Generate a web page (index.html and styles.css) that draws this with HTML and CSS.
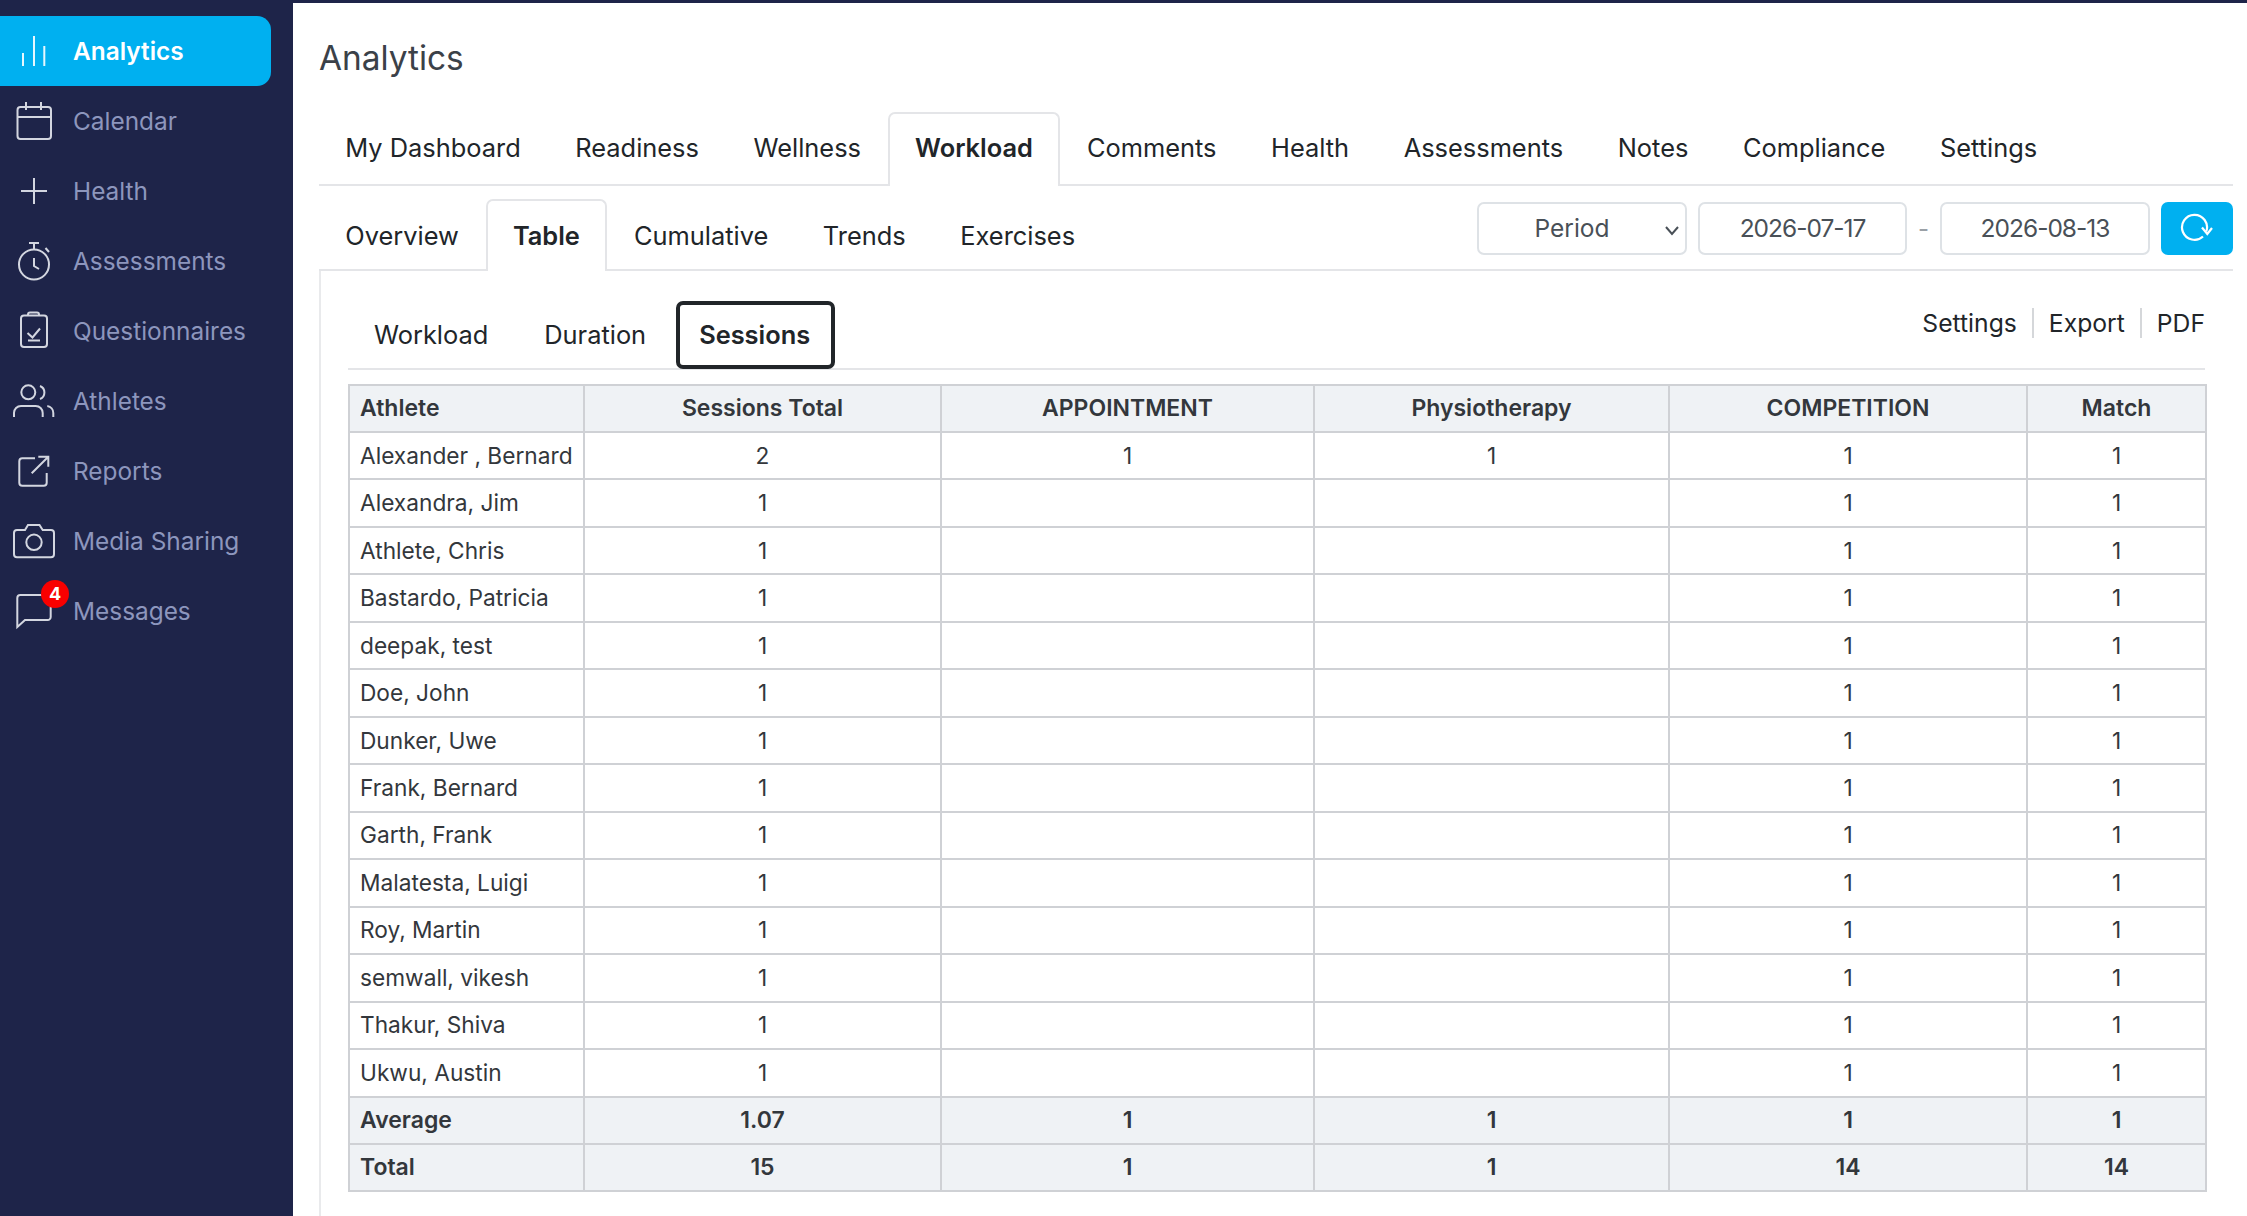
FILE: index.html
```html
<!DOCTYPE html>
<html lang="en">
<head>
    <meta charset="UTF-8">
    <title>Analytics</title>
    <link rel="stylesheet" href="styles.css">
</head>
<body>
    <!-- Sidebar -->
    <aside class="sidebar">
        <a class="side-item active">
            <span class="side-icon"><svg viewBox="0 0 48 48"><path d="M13 26v13M24 9v30M34.3 19v20"/></svg></span>
            Analytics
        </a>
        <a class="side-item">
            <span class="side-icon"><svg viewBox="0 0 48 48"><rect x="7.5" y="10" width="33.500" height="32" rx="3"/><path d="M7.500 20h33.500M16 5v8M31 5v8"/></svg></span>
            Calendar
        </a>
        <a class="side-item">
            <span class="side-icon"><svg viewBox="0 0 48 48"><path d="M24 11v26M11 24h26"/></svg></span>
            Health
        </a>
        <a class="side-item">
            <span class="side-icon"><svg viewBox="0 0 48 48"><circle cx="24" cy="27.500" r="15"/><path d="M19 6h10M24 6v6M24 21v8l5 3M35.500 11l3.500 4"/></svg></span>
            Assessments
        </a>
        <a class="side-item">
            <span class="side-icon"><svg viewBox="0 0 48 48"><rect x="11" y="8.500" width="26" height="31.500" rx="3"/><path d="M18 8.500v-1a2 2 0 0 1 2-2h7a2 2 0 0 1 2 2v1M17.500 26l5 4.500 7.500-9M18 33.500h12"/></svg></span>
            Questionnaires
        </a>
        <a class="side-item">
            <span class="side-icon"><svg viewBox="0 0 48 48"><circle cx="18.300" cy="15.300" r="7"/><path d="M30 9a7 7 0 0 1 0 13M4 40v-4a7 7 0 0 1 7-7h14.700a7 7 0 0 1 7 7v4M37.300 29a7 7 0 0 1 6 7v4"/></svg></span>
            Athletes
        </a>
        <a class="side-item">
            <span class="side-icon"><svg viewBox="0 0 48 48"><path d="M25 11.300H12.300a3 3 0 0 0-3 3v21.400a3 3 0 0 0 3 3h21.400a3 3 0 0 0 3-3V26M21.700 26.300 38.300 9.700M28.300 9.700h10v10"/></svg></span>
            Reports
        </a>
        <a class="side-item">
            <span class="side-icon"><svg viewBox="0 0 48 48"><path d="M7 13h8l3-5h11.500l3.200 5H41a3 3 0 0 1 3 3v21.300a3 3 0 0 1-3 3H7a3 3 0 0 1-3-3V16a3 3 0 0 1 3-3z"/><circle cx="24" cy="25.300" r="7.700"/></svg></span>
            Media Sharing
        </a>
        <a class="side-item">
            <span class="side-icon">
                <svg viewBox="0 0 48 48"><path d="M10.300 8h27.400a3 3 0 0 1 3 3v19a3 3 0 0 1-3 3H15l-7.700 7V11a3 3 0 0 1 3-3z"/></svg>
                <span class="badge">4</span>
            </span>
            Messages
        </a>
    </aside>

    <main class="content">
        <h1 class="page-title">Analytics</h1>

        <!-- Main tabs -->
        <nav class="tabs main-tabs">
            <a class="tab">My Dashboard</a>
            <a class="tab">Readiness</a>
            <a class="tab">Wellness</a>
            <a class="tab active">Workload</a>
            <a class="tab">Comments</a>
            <a class="tab">Health</a>
            <a class="tab">Assessments</a>
            <a class="tab">Notes</a>
            <a class="tab">Compliance</a>
            <a class="tab">Settings</a>
        </nav>

        <!-- Second row tabs + period filter -->
        <div class="tabs second-row">
            <nav class="second-tabs">
                <a class="tab">Overview</a>
                <a class="tab active">Table</a>
                <a class="tab">Cumulative</a>
                <a class="tab">Trends</a>
                <a class="tab">Exercises</a>
            </nav>
            <div class="filters">
                <div class="field select-field">
                    <span>Period</span>
                    <svg class="chevron" viewBox="0 0 16 16"><path d="M2 5l6 7 6-7"/></svg>
                </div>
                <div class="field date-field first-date">2026-07-17</div>
                <span class="dash">-</span>
                <div class="field date-field">2026-08-13</div>
                <button class="refresh-btn">
                    <svg viewBox="0 0 34 34"><path d="M23 24.500A12.500 12.500 0 1 1 26.300 19.500"/><path d="M22 15.500l5.300 6.500 4.700-6"/></svg>
                </button>
            </div>
        </div>

        <section class="panel">
            <div class="sub-bar">
                <nav class="sub-tabs">
                    <a class="sub-tab">Workload</a>
                    <a class="sub-tab">Duration</a>
                    <a class="sub-tab active">Sessions</a>
                </nav>
                <div class="actions">
                    <a>Settings</a>
                    <a>Export</a>
                    <a>PDF</a>
                </div>
            </div>

            <table class="data-table">
                <colgroup>
                    <col class="col-athlete">
                    <col class="col-total">
                    <col class="col-appt">
                    <col class="col-physio">
                    <col class="col-comp">
                    <col class="col-match">
                </colgroup>
                <thead>
                    <tr><th>Athlete</th><th>Sessions Total</th><th>APPOINTMENT</th><th>Physiotherapy</th><th>COMPETITION</th><th>Match</th></tr>
                </thead>
                <tbody>
                    <tr><td>Alexander , Bernard</td><td>2</td><td>1</td><td>1</td><td>1</td><td>1</td></tr>
                    <tr><td>Alexandra, Jim</td><td>1</td><td></td><td></td><td>1</td><td>1</td></tr>
                    <tr><td>Athlete, Chris</td><td>1</td><td></td><td></td><td>1</td><td>1</td></tr>
                    <tr><td>Bastardo, Patricia</td><td>1</td><td></td><td></td><td>1</td><td>1</td></tr>
                    <tr><td>deepak, test</td><td>1</td><td></td><td></td><td>1</td><td>1</td></tr>
                    <tr><td>Doe, John</td><td>1</td><td></td><td></td><td>1</td><td>1</td></tr>
                    <tr><td>Dunker, Uwe</td><td>1</td><td></td><td></td><td>1</td><td>1</td></tr>
                    <tr><td>Frank, Bernard</td><td>1</td><td></td><td></td><td>1</td><td>1</td></tr>
                    <tr><td>Garth, Frank</td><td>1</td><td></td><td></td><td>1</td><td>1</td></tr>
                    <tr><td>Malatesta, Luigi</td><td>1</td><td></td><td></td><td>1</td><td>1</td></tr>
                    <tr><td>Roy, Martin</td><td>1</td><td></td><td></td><td>1</td><td>1</td></tr>
                    <tr><td>semwall, vikesh</td><td>1</td><td></td><td></td><td>1</td><td>1</td></tr>
                    <tr><td>Thakur, Shiva</td><td>1</td><td></td><td></td><td>1</td><td>1</td></tr>
                    <tr><td>Ukwu, Austin</td><td>1</td><td></td><td></td><td>1</td><td>1</td></tr>
                </tbody>
                <tfoot>
                    <tr><td>Average</td><td>1.07</td><td>1</td><td>1</td><td>1</td><td>1</td></tr>
                    <tr><td>Total</td><td>15</td><td>1</td><td>1</td><td>14</td><td>14</td></tr>
                </tfoot>
            </table>
        </section>
    </main>
</body>
</html>
```

FILE: styles.css
```css
* {
    margin: 0;
    padding: 0;
    box-sizing: border-box;
}

html, body {
    height: 100%;
}

body {
    display: flex;
    font-family: 'Inter', 'Liberation Sans', sans-serif;
    color: #212529;
    background: #fff;
    overflow: hidden;
}

/* Sidebar */
.sidebar {
    flex: 0 0 293px;
    background: #1e2449;
    padding: 16px 22px 0 0;
}

.side-item {
    display: flex;
    align-items: center;
    gap: 15px;
    height: 70px;
    padding-left: 10px;
    font-size: 24.400px;
    color: #8d96bd;
}

.side-item.active {
    background: #00b0f0;
    color: #fff;
    font-weight: 600;
    border-radius: 0 14px 14px 0;
}

.side-icon {
    position: relative;
    flex: 0 0 48px;
    height: 48px;
}

.side-icon svg {
    display: block;
    width: 48px;
    height: 48px;
    fill: none;
    stroke: #d3d6e0;
    stroke-width: 2;
}

.side-item.active .side-icon svg {
    stroke: #e6f7fe;
}

.badge {
    position: absolute;
    left: 31px;
    top: -7px;
    width: 28px;
    height: 28px;
    border-radius: 50%;
    background: #f80000;
    color: #fff;
    font-size: 18px;
    font-weight: 700;
    line-height: 28px;
    text-align: center;
}

/* Content */
.content {
    flex: 1;
    min-width: 0;
    border-top: 3px solid #1e2449;
    padding: 0 14px 0 26px;
}

.page-title {
    height: 109px;
    padding-top: 31px;
    font-size: 33.400px;
    font-weight: 400;
    line-height: 48px;
    color: #3b4148;
}

/* Tabs */
.tabs {
    display: flex;
    border-bottom: 2px solid #e4e5e8;
}

.main-tabs {
    height: 74px;
    padding-left: 0;
}

.main-tabs .tab {
    padding-bottom: 3px;
}

.main-tabs .tab:first-child,
.second-tabs .tab:first-child {
    margin-left: -1px;
}

.main-tabs .tab.active {
    padding-bottom: 5px;
}

.second-row {
    height: 85px;
    justify-content: space-between;
}

.second-tabs {
    display: flex;
    align-self: flex-end;
    height: 70px;
}

.tab {
    display: flex;
    align-items: center;
    height: 100%;
    padding: 0 25.300px;
    font-size: 25.400px;
    color: #212529;
    border: 2px solid transparent;
    border-bottom: 0;
    border-radius: 7px 7px 0 0;
    white-space: nowrap;
}

.tab.active {
    position: relative;
    font-weight: 600;
    border-color: #e4e5e8;
    background: #fff;
    height: calc(100% + 2px);
    padding: 0 24.800px 2px;
}

/* Period filter */
.filters {
    display: flex;
    align-items: flex-start;
    padding-top: 16px;
    gap: 11px;
}

.field {
    display: flex;
    align-items: center;
    justify-content: center;
    height: 53px;
    padding-bottom: 2px;
    border: 2px solid #dee2e6;
    border-radius: 7px;
    font-size: 24.500px;
    color: #495057;
}

.select-field {
    position: relative;
    width: 210px;
    padding-right: 20px;
}

.chevron {
    position: absolute;
    right: 5px;
    top: 18px;
    width: 16px;
    height: 16px;
    fill: none;
    stroke: #495057;
    stroke-width: 2;
}

.date-field {
    width: 210px;
    letter-spacing: -1px;
}

.first-date {
    width: 209px;
}

.dash {
    width: 22px;
    line-height: 53px;
    margin: 0 -5.500px;
    text-align: center;
    font-size: 24px;
    color: #9aa0a6;
}

.refresh-btn {
    width: 72px;
    height: 53px;
    border: 0;
    border-radius: 7px;
    background: #00b0f0;
    display: flex;
    align-items: center;
    justify-content: center;
}

.refresh-btn svg {
    width: 34px;
    height: 34px;
    fill: none;
    stroke: #fff;
    stroke-width: 2.200;
}

/* Panel */
.panel {
    border-left: 2px solid #e9eaec;
    padding: 0 28px 0 27px;
    height: 950px;
}

.sub-bar {
    display: flex;
    justify-content: space-between;
    align-items: flex-start;
    height: 99px;
    padding-top: 30px;
    border-bottom: 2px solid #e4e5e8;
}

.sub-tabs {
    display: flex;
    margin-left: -2px;
}

.sub-tab {
    display: flex;
    align-items: center;
    height: 68px;
    padding: 0 24px 2px;
    font-size: 25.400px;
    color: #212529;
    border: 4px solid transparent;
    border-radius: 7px;
}

.sub-tab.active {
    font-weight: 600;
    border-color: #212529;
    padding: 0 21px 2px 19px;
    margin-left: 2px;
}

.actions {
    display: flex;
    align-items: center;
    height: 30px;
    margin-top: 7px;
    font-size: 24.700px;
    color: #212529;
}

.actions a {
    padding: 0 15px;
    line-height: 30px;
    border-left: 2px solid #d5d7da;
}

.actions a:first-child {
    border-left: 0;
}

.actions a:last-child {
    padding-right: 0;
}

/* Table */
.data-table {
    width: 1857px;
    margin-top: 13.500px;
    border-collapse: collapse;
    table-layout: fixed;
    font-size: 22.700px;
    color: #33373c;
}

.col-athlete { width: 235px; }
.col-total { width: 357px; }
.col-appt { width: 373px; }
.col-physio { width: 355px; }
.col-comp { width: 358px; }
.col-match { width: 179px; }

.data-table th,
.data-table td {
    height: 47.470px;
    border: 2px solid #cfd1d5;
    text-align: center;
    padding: 0 10px 1px;
    white-space: nowrap;
}

.data-table th:first-child,
.data-table td:first-child {
    text-align: left;
}

.data-table thead tr,
.data-table tfoot tr {
    background: #eff2f5;
    font-weight: 600;
    font-size: 23px;
}

.data-table th {
    font-weight: 600;
}
```
